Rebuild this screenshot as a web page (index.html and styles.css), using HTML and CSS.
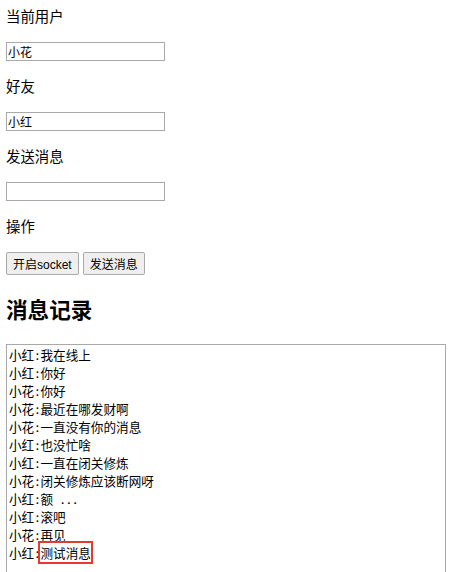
FILE: index.html
```html
<!DOCTYPE html>
<html lang="zh-CN">
<head>
<meta charset="utf-8">
<title>socket</title>
<link rel="stylesheet" href="styles.css">
</head>
<body>
<div class="page">
  <div class="label">当前用户</div>
  <input class="field" type="text" value="小花">
  <div class="label">好友</div>
  <input class="field" type="text" value="小红">
  <div class="label">发送消息</div>
  <input class="field" type="text" value="">
  <div class="label">操作</div>
  <div class="actions">
    <button class="btn" type="button">开启socket</button>
    <button class="btn" type="button">发送消息</button>
  </div>
  <h2 class="title">消息记录</h2>
  <div class="log">
    <div class="msg">小红:我在线上</div>
    <div class="msg">小红:你好</div>
    <div class="msg">小花:你好</div>
    <div class="msg">小花:最近在哪发财啊</div>
    <div class="msg">小花:一直没有你的消息</div>
    <div class="msg">小红:也没忙啥</div>
    <div class="msg">小红:一直在闭关修炼</div>
    <div class="msg">小花:闭关修炼应该断网呀</div>
    <div class="msg">小红:额 ...</div>
    <div class="msg">小红:滚吧</div>
    <div class="msg">小花:再见</div>
    <div class="msg">小红:<span class="hl">测试消息</span></div>
  </div>
</div>
</body>
</html>
```

FILE: styles.css
```css
html, body {
  margin: 0;
  padding: 0;
  background: #ffffff;
}
body {
  font-family: "Liberation Sans", "Noto Sans CJK SC", sans-serif;
  color: #000000;
  overflow: hidden;
}
.page {
  padding: 8px 6px 0 6px;
  display: flex;
  flex-direction: column;
  align-items: flex-start;
}
.label {
  font-size: 14.4px;
  line-height: 18px;
  height: 18px;
  margin-bottom: 16px;
}
.field {
  box-sizing: border-box;
  width: 159px;
  height: 19px;
  margin: 0 0 17px 0;
  padding: 0 1px;
  border: 1px solid #a9a9a9;
  border-radius: 0;
  font-family: "Liberation Sans", "Noto Sans CJK SC", sans-serif;
  font-size: 12px;
  color: #000000;
  background: #ffffff;
  outline: none;
}
.actions {
  display: flex;
  gap: 4px;
}
.btn {
  box-sizing: border-box;
  height: 23px;
  padding: 0 6px;
  margin: 0;
  border: 1px solid #a9a9a9;
  border-radius: 2px;
  background: #efefef;
  font-family: "Liberation Sans", "Noto Sans CJK SC", sans-serif;
  font-size: 12px;
  color: #000000;
}
.title {
  margin: 22px 0 19px 0;
  font-size: 21.6px;
  line-height: 28px;
  font-weight: bold;
}
.log {
  box-sizing: border-box;
  width: 440px;
  height: 300px;
  border: 1px solid #a9a9a9;
  padding: 1px 2px;
  font-family: "Noto Sans Mono CJK SC", "Noto Sans CJK SC", monospace;
  font-size: 12.6px;
  line-height: 18px;
}
.msg {
  white-space: pre;
}
.hl {
  outline: 2px solid #e53935;
  outline-offset: 0;
}
```
